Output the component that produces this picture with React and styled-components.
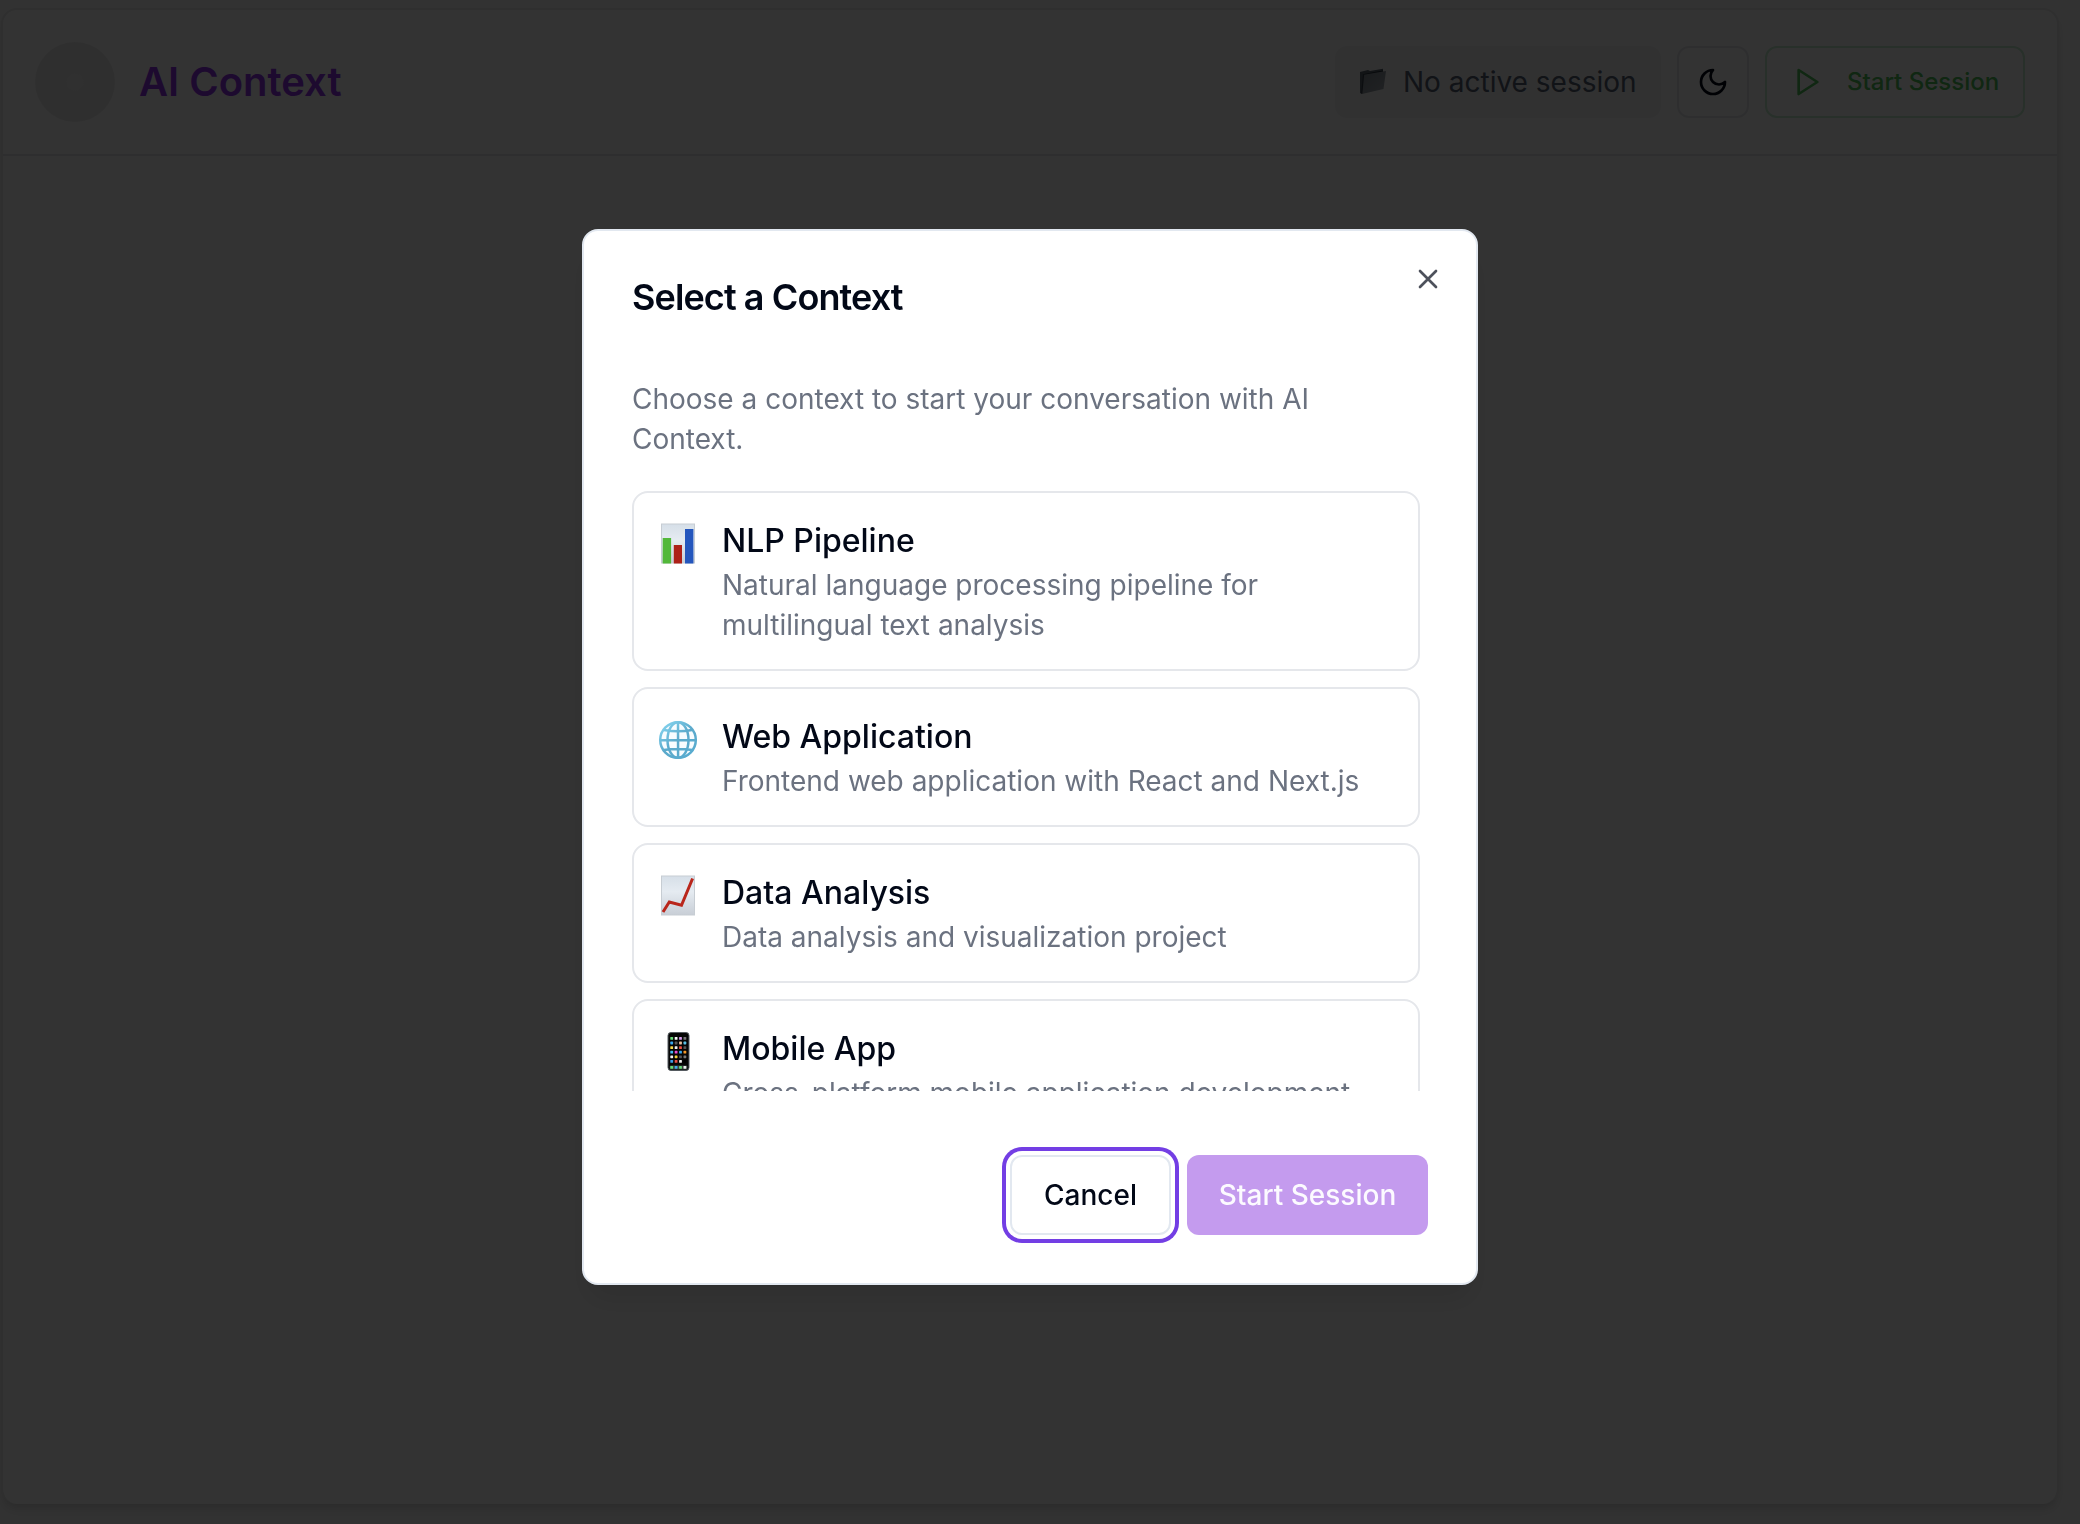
import React from "react";
import styled, { createGlobalStyle } from "styled-components";

const Global = createGlobalStyle`
  *, *::before, *::after { box-sizing: border-box; }
  body {
    margin: 0;
    background: #fafafa;
    color: #020817;
    font-family: Inter, "Noto Sans", sans-serif;
    font-size: 28px;
    overflow: hidden;
  }
  button { font: inherit; color: inherit; margin: 0; }
  h1, h2, h3, p { margin: 0; }
  svg { display: block; flex-shrink: 0; }
`;

const Page = styled.div`
  height: 1524px;
  padding: 8px 21px 20px 1px;
`;

const Panel = styled.main`
  height: 1496px;
  background: #fff;
  border: 2px solid #e8e8ea;
  border-bottom: 0;
  border-radius: 16px;
  box-shadow: 0 8px 12px -2px rgba(0, 0, 0, 0.1), 0 4px 8px -4px rgba(0, 0, 0, 0.1);
`;

const Header = styled.header`
  display: flex;
  align-items: center;
  justify-content: space-between;
  height: 146px;
  padding: 0 32px;
  border-bottom: 2px solid #e5e7eb;
`;

const Brand = styled.div`
  display: flex;
  align-items: center;
  gap: 24px;
`;

const Avatar = styled.div`
  width: 80px;
  height: 80px;
  border-radius: 50%;
  background: radial-gradient(circle, #f0f0f0 0 4px, #ececec 9px);
`;

const BrandName = styled.h1`
  font-size: 40px;
  line-height: 56px;
  font-weight: 600;
  color: #9333ea;
`;

const Actions = styled.div`
  display: flex;
  align-items: center;
  gap: 16px;
`;

const Status = styled.div`
  display: flex;
  align-items: center;
  gap: 16px;
  width: 326px;
  height: 72px;
  padding-left: 24px;
  border-radius: 12px;
  background: #f5f5f6;
  color: #566072;
  white-space: nowrap;
`;

const HeaderButton = styled.button`
  display: flex;
  align-items: center;
  justify-content: ${(p) => (p.$wide ? "flex-start" : "center")};
  gap: 23px;
  width: ${(p) => (p.$wide ? "260px" : "72px")};
  height: 72px;
  padding: 0 ${(p) => (p.$wide ? "25px" : "0")};
  border: 2px solid ${(p) => (p.$wide ? "#c6efd1" : "#e5e7eb")};
  border-radius: 12px;
  background: transparent;
  color: ${(p) => (p.$wide ? "#50c05c" : "#020817")};
  font-size: 24px;
  line-height: 28px;
  font-weight: 500;
  white-space: nowrap;
`;

const Overlay = styled.div`
  position: fixed;
  inset: 0;
  display: flex;
  align-items: center;
  justify-content: center;
  padding: 0 20px 10px 0;
  background: rgba(0, 0, 0, 0.8);
`;

const Dialog = styled.section`
  position: relative;
  display: flex;
  flex-direction: column;
  gap: 32px;
  width: 896px;
  height: 1056px;
  padding: 48px;
  background: #fff;
  border: 2px solid #e2e8f0;
  border-radius: 16px;
  box-shadow: 0 20px 30px -6px rgba(0, 0, 0, 0.1), 0 8px 12px -8px rgba(0, 0, 0, 0.1);
`;

const Close = styled.button`
  position: absolute;
  top: 32px;
  right: 32px;
  padding: 0;
  border: 0;
  background: none;
  opacity: 0.7;
`;

const DialogTitle = styled.h2`
  font-size: 36px;
  line-height: 36px;
  font-weight: 600;
  letter-spacing: -0.025em;
`;

const Intro = styled.p`
  margin-top: 32px;
  line-height: 40px;
  color: #6b7280;
`;

const List = styled.div`
  display: flex;
  flex-direction: column;
  gap: 16px;
  height: 600px;
  padding-right: 8px;
  overflow: hidden;
`;

const Option = styled.article`
  display: flex;
  flex-shrink: 0;
  gap: 24px;
  padding: 24px;
  border: 2px solid #e5e7eb;
  border-radius: 16px;
`;

const OptionIcon = styled.div`
  padding-top: 4px;
`;

const OptionTitle = styled.h3`
  font-size: 32px;
  line-height: 48px;
  font-weight: 500;
`;

const OptionText = styled.p`
  line-height: 40px;
  color: #6b7280;
`;

const Footer = styled.footer`
  display: flex;
  justify-content: flex-end;
  gap: 16px;
  padding-top: 32px;
`;

const FooterButton = styled.button`
  width: ${(p) => (p.$primary ? "241px" : "161px")};
  height: 80px;
  padding: 0;
  border: ${(p) => (p.$primary ? "0" : "2px solid #e2e8f0")};
  border-radius: 12px;
  background: ${(p) => (p.$primary ? "#c49bee" : "#fff")};
  color: ${(p) => (p.$primary ? "#fcfaff" : "#020817")};
  box-shadow: ${(p) => (p.$primary ? "none" : "0 0 0 4px #fff, 0 0 0 8px #733ee4")};
  font-weight: 500;
`;

const Stroke = ({ children }) => (
  <svg width="32" height="32" viewBox="0 0 24 24" fill="none" stroke="currentColor" strokeWidth="2" strokeLinecap="round" strokeLinejoin="round">
    {children}
  </svg>
);

const Paper = () => (
  <>
    <defs>
      <linearGradient id="paper" x1="0" y1="0" x2="0" y2="1">
        <stop offset="0" stopColor="#d6dfe8" />
        <stop offset="0.4" stopColor="#e5ebf1" />
        <stop offset="1" stopColor="#c8ced6" />
      </linearGradient>
    </defs>
    <rect x="3.5" y="3" width="33" height="39" fill="url(#paper)" stroke="#c7cdd3" />
  </>
);

const BarsIcon = () => (
  <svg width="40" height="44" viewBox="0 0 40 44">
    <Paper />
    <rect x="4.7" y="17" width="8.4" height="25.5" fill="#52b83a" />
    <rect x="15.8" y="24" width="8.2" height="18.5" fill="#ad2018" />
    <rect x="27" y="8" width="8.4" height="34.5" fill="#2456bd" />
  </svg>
);

const GlobeIcon = () => (
  <svg width="40" height="44" viewBox="0 0 40 44" fill="none">
    <defs>
      <linearGradient id="globe" gradientUnits="userSpaceOnUse" x1="6" y1="6" x2="34" y2="40">
        <stop offset="0" stopColor="#84d3ee" />
        <stop offset="0.5" stopColor="#5ba9cb" />
        <stop offset="1" stopColor="#58acd0" />
      </linearGradient>
    </defs>
    <circle cx="20" cy="23" r="18" fill="#f7fcff" />
    <g stroke="url(#globe)" strokeWidth="2.5">
      <circle cx="20" cy="23" r="17.8" />
      <ellipse cx="20" cy="23" rx="10.5" ry="17.8" />
      <path d="M20 5L20.1 41M2 23.2Q20 22.6 38 23.2M6 13Q20 15.5 34 13M5.5 33Q20 31 34.5 33" />
    </g>
  </svg>
);

const TrendIcon = () => (
  <svg width="40" height="44" viewBox="0 0 40 44">
    <Paper />
    <path d="M5 39L11.3 29L23.5 32.3L34.6 5.5" fill="none" stroke="#b9261b" strokeWidth="3" />
  </svg>
);

const phoneRows = [
  ["#68df79", "#f7f7f7", "#d89cf2", "#777"],
  ["#38a8ef", "#555", "#e5bd9d", "#57bfe5"],
  ["#f3d749", "#eee", "#ed4f42", "#555"],
  ["#42bcf2", "#e64fd2", "#38a9f0", "#f39727"],
  ["#f3f3f3", "#f4d23b", "#555", "#777"],
  ["#3f9eeb", "#ea4c47", "#eee", "#000"],
];

const PhoneIcon = () => (
  <svg width="40" height="44" viewBox="0 0 40 44">
    <rect x="10" y="3.5" width="21" height="38" rx="3" fill="#050505" stroke="#555b60" strokeWidth="1" />
    {phoneRows.map((row, y) =>
      row.map((fill, x) => <rect key={x + "-" + y} x={12.3 + x * 4.4} y={8 + y * 4.6} width="2.8" height="2.8" rx="0.6" fill={fill} />)
    )}
    <rect x="11.7" y="36.5" width="17.6" height="4" rx="1" fill="#38443f" />
    {["#67dd77", "#42a9ee", "#67dd77", "#eee"].map((fill, x) => (
      <rect key={x} x={12.3 + x * 4.4} y="37" width="2.8" height="2.8" rx="0.6" fill={fill} />
    ))}
  </svg>
);

const FolderIcon = () => (
  <svg width="28" height="28" viewBox="0 0 28 28">
    <defs>
      <linearGradient id="folder" x1="0" y1="0" x2="1" y2="1">
        <stop offset="0" stopColor="#7d868f" />
        <stop offset="1" stopColor="#a4abb3" />
      </linearGradient>
    </defs>
    <path d="M1 4L9 2L11 3L24 0.8V4L5 8L3 26L1 25Z" fill="#59636f" />
    <path d="M4 7L24 3.4" stroke="#252d36" strokeWidth="1.6" />
    <path d="M4.5 6.8L27 3L24.5 21L3 26Z" fill="url(#folder)" />
    <path d="M4.5 7L2.8 25.5" stroke="#38414c" strokeWidth="1.2" />
  </svg>
);

const contexts = [
  { title: "NLP Pipeline", text: "Natural language processing pipeline for multilingual text analysis", Icon: BarsIcon },
  { title: "Web Application", text: "Frontend web application with React and Next.js", Icon: GlobeIcon },
  { title: "Data Analysis", text: "Data analysis and visualization project", Icon: TrendIcon },
  { title: "Mobile App", text: "Cross-platform mobile application development", Icon: PhoneIcon },
];

export default function App() {
  return (
    <>
      <Global />
      <Page>
        <Panel>
          <Header>
            <Brand>
              <Avatar />
              <BrandName>AI Context</BrandName>
            </Brand>
            <Actions>
              <Status>
                <FolderIcon />
                <span>No active session</span>
              </Status>
              <HeaderButton aria-label="Toggle theme">
                <Stroke><path d="M12 3a6 6 0 0 0 9 9 9 9 0 1 1-9-9Z" /></Stroke>
              </HeaderButton>
              <HeaderButton $wide>
                <Stroke><polygon points="5 3 19 12 5 21 5 3" /></Stroke>
                Start Session
              </HeaderButton>
            </Actions>
          </Header>
        </Panel>
      </Page>
      <Overlay>
        <Dialog role="dialog">
          <DialogTitle>Select a Context</DialogTitle>
          <Intro>Choose a context to start your conversation with AI Context.</Intro>
          <List>
            {contexts.map(({ title, text, Icon }) => (
              <Option key={title}>
                <OptionIcon><Icon /></OptionIcon>
                <div>
                  <OptionTitle>{title}</OptionTitle>
                  <OptionText>{text}</OptionText>
                </div>
              </Option>
            ))}
          </List>
          <Footer>
            <FooterButton>Cancel</FooterButton>
            <FooterButton $primary>Start Session</FooterButton>
          </Footer>
          <Close aria-label="Close">
            <Stroke><path d="M18 6 6 18M6 6l12 12" /></Stroke>
          </Close>
        </Dialog>
      </Overlay>
    </>
  );
}
